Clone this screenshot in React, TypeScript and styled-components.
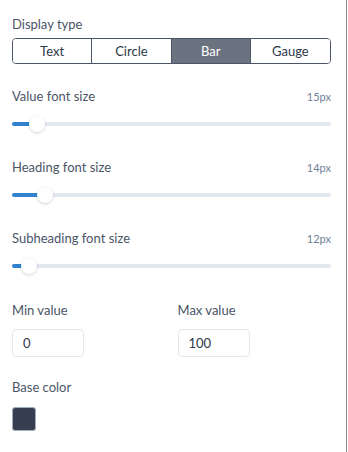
import React, { useState } from "react";
import styled, { createGlobalStyle } from "styled-components";

// Gauge/widget settings panel

const GlobalStyle = createGlobalStyle`
  html, body {
    margin: 0;
    padding: 0;
    background: #ffffff;
  }
  body {
    font-family: Lato, "Noto Sans", "Liberation Sans", sans-serif;
  }
`;

const displayTypes = ["Text", "Circle", "Bar", "Gauge"];

const sliders = [
  { label: "Value font size", value: 15, pct: 7.8 },
  { label: "Heading font size", value: 14, pct: 10.4 },
  { label: "Subheading font size", value: 12, pct: 5.3 },
];

export default function App() {
  const [displayType, setDisplayType] = useState("Bar");

  return (
    <>
      <GlobalStyle />
      <Panel>
        <Section>
          <Label>Display type</Label>
          <Segmented>
            {displayTypes.map((t) => (
              <Segment
                key={t}
                $active={t === displayType}
                onClick={() => setDisplayType(t)}
              >
                {t}
              </Segment>
            ))}
          </Segmented>
        </Section>

        {sliders.map((s) => (
          <SliderBlock key={s.label}>
            <SliderHead>
              <Label>{s.label}</Label>
              <SliderValue>{s.value}px</SliderValue>
            </SliderHead>
            <Track>
              <Fill style={{ width: `${s.pct}%` }} />
              <Thumb style={{ left: `${s.pct}%` }} />
            </Track>
          </SliderBlock>
        ))}

        <Fields>
          <Field>
            <Label>Min value</Label>
            <NumberInput defaultValue="0" />
          </Field>
          <Field>
            <Label>Max value</Label>
            <NumberInput defaultValue="100" />
          </Field>
        </Fields>

        <ColorBlock>
          <Label>Base color</Label>
          <Swatch $color="#363e4f" />
        </ColorBlock>
      </Panel>
    </>
  );
}

const Panel = styled.div`
  width: 347px;
  height: 452px;
  box-sizing: border-box;
  border-right: 1px solid #8a8a8a;
  padding: 16px 15px 0 12px;
  display: flex;
  flex-direction: column;
`;

const Section = styled.div`
  display: flex;
  flex-direction: column;
  gap: 5px;
`;

const Label = styled.div`
  font-size: 13px;
  line-height: 17px;
  color: #4a5568;
`;

const Segmented = styled.div`
  display: grid;
  grid-template-columns: repeat(4, 1fr);
  border: 1px solid #4a5568;
  border-radius: 4px;
  overflow: hidden;
  height: 26px;
  box-sizing: border-box;
`;

const Segment = styled.button<{ $active: boolean }>`
  border: none;
  border-right: 1px solid #4a5568;
  background: ${(p) => (p.$active ? "#6b7280" : "#ffffff")};
  color: ${(p) => (p.$active ? "#ffffff" : "#2d3748")};
  font-family: inherit;
  font-size: 13px;
  padding: 0;
  cursor: pointer;

  &:last-child {
    border-right: none;
  }
`;

const SliderBlock = styled.div`
  margin-top: 24px;
  display: flex;
  flex-direction: column;
  gap: 17px;

  & + & {
    margin-top: 27px;
  }
`;

const SliderHead = styled.div`
  display: flex;
  justify-content: space-between;
  align-items: center;
`;

const SliderValue = styled.span`
  font-size: 11px;
  color: #718096;
`;

const Track = styled.div`
  position: relative;
  height: 4px;
  border-radius: 2px;
  background: #e2e8f0;
  margin-bottom: 6px;
`;

const Fill = styled.div`
  height: 100%;
  border-radius: 2px;
  background: #3182ce;
`;

const Thumb = styled.div`
  position: absolute;
  top: 50%;
  width: 16px;
  height: 16px;
  border-radius: 50%;
  background: #ffffff;
  box-shadow: 0 1px 3px rgba(0, 0, 0, 0.18);
  transform: translate(-50%, -50%);
`;

const Fields = styled.div`
  margin-top: 28px;
  display: grid;
  grid-template-columns: 1fr 1fr;
  column-gap: 12px;
`;

const Field = styled.div`
  display: flex;
  flex-direction: column;
  gap: 10px;
`;

const NumberInput = styled.input`
  width: 72px;
  height: 28px;
  box-sizing: border-box;
  border: 1px solid #e2e8f0;
  border-radius: 4px;
  padding: 0 10px;
  font-family: inherit;
  font-size: 13px;
  color: #2d3748;
  outline: none;
`;

const ColorBlock = styled.div`
  margin-top: 22px;
  display: flex;
  flex-direction: column;
  gap: 11px;
`;

const Swatch = styled.div<{ $color: string }>`
  width: 24px;
  height: 24px;
  box-sizing: border-box;
  border-radius: 3px;
  border: 1px solid #a0aec0;
  background: ${(p) => p.$color};
`;
